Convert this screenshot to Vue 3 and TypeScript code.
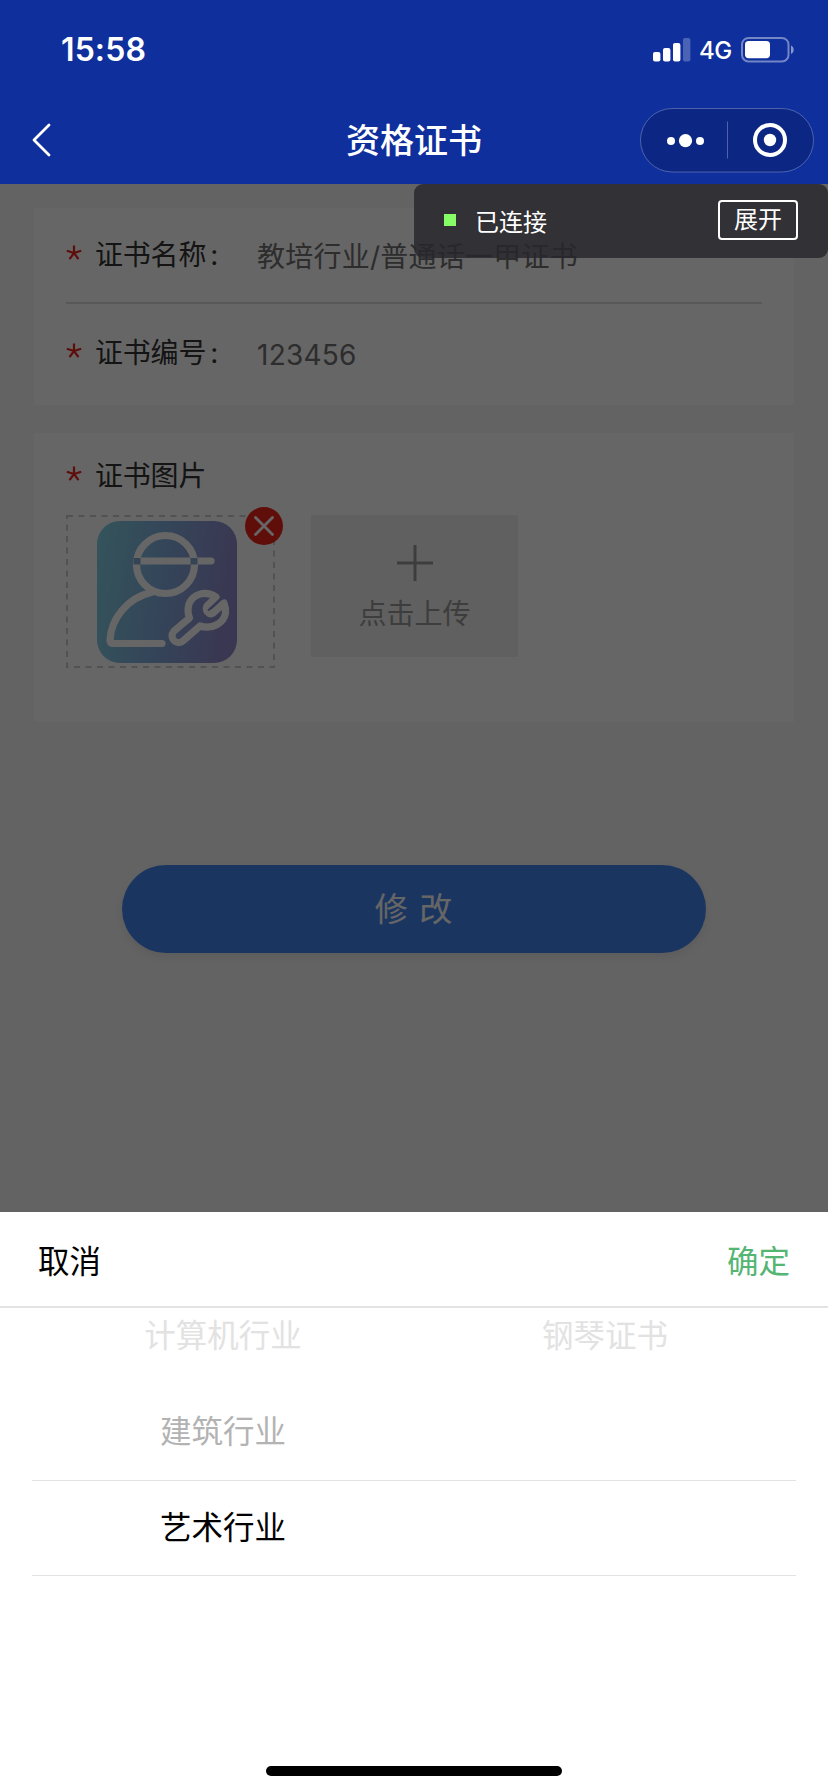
<script setup lang="ts">
import { ref } from 'vue'

interface Field {
  label: string
  value: string
}

const fields: Field[] = [
  { label: '证书名称', value: '教培行业/普通话一甲证书' },
  { label: '证书编号', value: '123456' },
]

const columns = ref<string[][]>([
  ['计算机行业', '建筑行业', '艺术行业'],
  ['钢琴证书'],
])
</script>

<template>
  <div class="screen">
    <header class="top">
      <div class="status">
        <span class="time">15:58</span>
        <div class="signals">
          <svg class="bars" width="38" height="24" viewBox="0 0 38 24">
            <rect x="0" y="14" width="7.4" height="9.4" rx="2" fill="#fff" />
            <rect x="10" y="10" width="7.4" height="13.4" rx="2" fill="#fff" />
            <rect x="20" y="5" width="7.4" height="18.4" rx="2" fill="#fff" />
            <rect x="30" y="0" width="7.4" height="23.4" rx="2" fill="#fff" opacity="0.25" />
          </svg>
          <span class="net">4G</span>
          <svg class="battery" width="54" height="26" viewBox="0 0 54 26">
            <rect x="1" y="1" width="46.5" height="23.4" rx="6.5" fill="none" stroke="#fff" stroke-opacity="0.42" stroke-width="2" />
            <rect x="4" y="4" width="25" height="17.2" rx="3.6" fill="#fff" />
            <path d="M50 8.500c3.600 1.600 3.600 6.900 0 8.500z" fill="#fff" fill-opacity="0.5" />
          </svg>
        </div>
      </div>
      <nav class="nav">
        <svg class="back" width="22" height="36" viewBox="0 0 22 36">
          <path d="M18 3 3 18l15 15" fill="none" stroke="#fff" stroke-width="2.8" stroke-linecap="round" stroke-linejoin="round" />
        </svg>
        <h1 class="title">资格证书</h1>
        <div class="capsule">
          <svg width="174" height="65" viewBox="0 0 174 65">
            <rect x="0.5" y="0.5" width="173" height="63.500" rx="31.700" fill="#000" fill-opacity="0.16" stroke="#fff" stroke-opacity="0.26" />
            <circle cx="31" cy="33" r="4" fill="#fff" />
            <circle cx="45.500" cy="32.700" r="6.600" fill="#fff" />
            <circle cx="60" cy="33" r="4" fill="#fff" />
            <path d="M87.500 13.500v37" stroke="#fff" stroke-opacity="0.28" />
            <circle cx="130" cy="32" r="15" fill="none" stroke="#fff" stroke-width="4" />
            <circle cx="130" cy="32" r="6.200" fill="#fff" />
          </svg>
        </div>
      </nav>
    </header>

    <main class="page">
      <section class="card fields">
        <div v-for="f in fields" :key="f.label" class="row">
          <svg class="star" width="16" height="16" viewBox="0 0 16 16">
            <path d="M8 8V0.500M8 8 .8 5.700M8 8l7.200-2.300M8 8l-4.500 6.200M8 8l4.500 6.200" />
          </svg>
          <span class="label">{{ f.label }}<span class="colon">:</span></span>
          <span class="value">{{ f.value }}</span>
        </div>
      </section>

      <section class="card photos">
        <div class="heading">
          <svg class="star" width="16" height="16" viewBox="0 0 16 16">
            <path d="M8 8V0.500M8 8 .8 5.700M8 8l7.200-2.300M8 8l-4.500 6.200M8 8l4.500 6.200" />
          </svg>
          <span class="label">证书图片</span>
        </div>
        <div class="tiles">
          <div class="thumb">
            <svg class="outline" width="209" height="153" viewBox="0 0 209 153">
              <rect x="1" y="1" width="207" height="151" fill="none" stroke="#ccc" stroke-width="2" stroke-dasharray="6 5.500" />
            </svg>
            <svg width="140" height="142" viewBox="0 0 140 142">
              <defs>
                <linearGradient id="tile" x1="0" y1="0" x2="1" y2="0.150">
                  <stop offset="0" stop-color="#82d2e4" />
                  <stop offset="0.500" stop-color="#82aede" />
                  <stop offset="1" stop-color="#918acc" />
                </linearGradient>
              </defs>
              <rect width="140" height="142" rx="23" fill="url(#tile)" />
              <g fill="none" stroke="#fff" stroke-width="7.200" stroke-linecap="round" stroke-linejoin="round">
                <circle cx="68.500" cy="43.500" r="29" />
                <path d="M40 40h74" />
                <path d="M54 71.500C30 77 14 98 13 119q0 3.500 3 3.500h49" />
                <path d="M119 76C108 69 96 73 92 83c-1.500 5-1.500 9 .5 14L77 110c-6 7 3 16 10 9l16-14c12 4 24-3 25.500-13q.5-5-1.500-10l-11 10q-3 2-5.500-1-2-3-.5-6z" />
              </g>
              <path d="M36.500 37h7v6.500h-7zM93.500 37h7v6.500h-7z" fill="#83a9d4" />
              <path d="M111 89.500 127 75" stroke="#8a92cf" stroke-width="2" />
            </svg>
            <svg class="remove" width="38" height="38" viewBox="0 0 38 38">
              <circle cx="19" cy="19" r="19" fill="#f0241a" />
              <path d="m10.500 10.500 17 17m0-17-17 17" stroke="#fff" stroke-width="2.800" stroke-linecap="round" />
            </svg>
          </div>
          <div class="upload">
            <svg width="36" height="36" viewBox="0 0 36 36">
              <path d="M18 0v36M0 18h36" stroke="#999" stroke-width="3" />
            </svg>
            <span>点击上传</span>
          </div>
        </div>
      </section>

      <button class="submit" type="button">修 改</button>
      <div class="mask"></div>

      <aside class="debug">
        <i class="dot"></i>
        <span class="state">已连接</span>
        <button class="expand" type="button">展开</button>
      </aside>
    </main>

    <section class="sheet">
      <div class="actions">
        <span>取消</span>
        <span class="confirm">确定</span>
      </div>
      <div class="wheel">
        <ul v-for="(items, c) in columns" :key="c" class="column">
          <li v-for="(item, i) in items" :key="item" :class="'level' + i">{{ item }}</li>
        </ul>
        <div class="indicator"></div>
      </div>
      <div class="home"></div>
    </section>
  </div>
</template>

<style>
body {
  margin: 0;
}
</style>

<style scoped>
.screen {
  display: flex;
  flex-direction: column;
  width: 828px;
  height: 1792px;
  overflow: hidden;
  background: #fff;
  font-family: Inter, "Noto Sans CJK SC", sans-serif;
  font-weight: 400;
}
.top {
  height: 184px;
  background: #0f2f9d;
  color: #fff;
}
.status {
  display: flex;
  align-items: center;
  justify-content: space-between;
  height: 100px;
  padding: 0 33px 0 61px;
}
.time {
  font-size: 32px;
  font-weight: 600;
  line-height: 40px;
  letter-spacing: 0.1px;
}
.signals {
  display: flex;
  align-items: center;
}
.net {
  width: 33px;
  margin: 2px 9px 0 8px;
  font-size: 24px;
  font-weight: 500;
  line-height: 28px;
  letter-spacing: -0.5px;
}
.nav {
  display: grid;
  grid-template-columns: 200px 1fr 200px;
  align-items: center;
  height: 80px;
}
.back {
  margin-left: 31px;
}
.title {
  margin: 0;
  padding-top: 1px;
  font-size: 34px;
  font-weight: 500;
  line-height: 48px;
  text-align: center;
}
.capsule {
  height: 65px;
  margin-left: 12px;
}
.page {
  position: relative;
  display: flex;
  flex-direction: column;
  height: 1028px;
  background: #f7f7f7;
}
.card {
  box-sizing: border-box;
  width: 760px;
  margin: 24px auto 0;
  padding: 0 32px;
  background: #fff;
}
.fields {
  height: 197px;
}
.row {
  display: flex;
  align-items: center;
  height: 94px;
}
.row + .row {
  height: 98px;
  border-top: 2px solid #ddd;
}
.star {
  width: 16px;
  margin: 0 13px 4px 0;
  fill: none;
  stroke: #e8231c;
  stroke-width: 2.2;
}
.label {
  width: 162px;
  color: #333;
  font-size: 28px;
  line-height: 40px;
  letter-spacing: -0.2px;
}
.colon {
  margin-left: 4px;
}
.value {
  padding-top: 4px;
  color: #707070;
  font-size: 28px;
  line-height: 40px;
  letter-spacing: 0.25px;
}
.photos {
  height: 289px;
  margin-top: 28px;
}
.heading {
  display: flex;
  align-items: center;
  height: 78px;
  padding-top: 4px;
}
.tiles {
  display: flex;
  gap: 36px;
}
.thumb {
  position: relative;
  box-sizing: border-box;
  width: 209px;
  height: 153px;
  padding: 6px 0 0 31px;
}
.outline {
  position: absolute;
  top: 0;
  left: 0;
}
.remove {
  position: absolute;
  top: -8px;
  right: -8px;
}
.upload {
  display: flex;
  flex-direction: column;
  align-items: center;
  width: 207px;
  height: 142px;
  padding-top: 30px;
  box-sizing: border-box;
  background: #f0f0f0;
  color: #999;
  font-size: 28px;
  line-height: 40px;
}
.upload span {
  margin-top: 13px;
}
.submit {
  width: 584px;
  height: 88px;
  margin: 143px auto 0;
  padding: 0;
  border: 0;
  border-radius: 44px;
  background: #4585f2;
  box-shadow: 0 4px 8px rgba(0, 0, 0, 0.08);
  color: #fff;
  font: inherit;
  font-size: 33px;
  line-height: 85px;
  letter-spacing: 1px;
}
.mask {
  position: absolute;
  inset: 0;
  background: rgba(0, 0, 0, 0.6);
}
.debug {
  position: absolute;
  top: 0;
  right: 0;
  box-sizing: border-box;
  display: flex;
  align-items: center;
  width: 414px;
  height: 74px;
  padding: 0 30px;
  border-radius: 9px;
  background: rgba(40, 38, 43, 0.83);
  color: #fff;
  font-size: 24px;
}
.dot {
  width: 12px;
  height: 12px;
  margin-bottom: 2px;
  background: #86ff67;
}
.state {
  flex: 1;
  margin: -1px 0 0 19px;
}
.expand {
  box-sizing: border-box;
  width: 80px;
  height: 40px;
  margin-bottom: 2px;
  padding: 0;
  border: 2px solid #fff;
  border-radius: 4px;
  background: none;
  color: inherit;
  font: inherit;
  line-height: 36px;
}
.sheet {
  display: flex;
  flex-direction: column;
  height: 580px;
  background: #fff;
  color: #000;
  font-size: 31.500px;
}
.actions {
  box-sizing: border-box;
  display: flex;
  align-items: center;
  justify-content: space-between;
  height: 96px;
  padding: 0 38px;
  border-bottom: 2px solid #e3e3e3;
}
.confirm {
  color: #55b573;
}
.wheel {
  position: relative;
  display: flex;
  height: 452px;
  margin: 0 32px;
}
.column {
  flex: 1;
  margin: 0;
  padding: 4px 0 0;
  list-style: none;
  text-align: center;
}
.column li {
  height: 96px;
  line-height: 48px;
}
.level0 {
  color: #e2e2e2;
}
.level1 {
  color: #b3b3b3;
}
.indicator {
  position: absolute;
  top: 172px;
  left: 0;
  right: 0;
  height: 94px;
  border-top: 1px solid #e3e3e3;
  border-bottom: 1px solid #e3e3e3;
}
.home {
  width: 296px;
  height: 10px;
  margin: 6px auto 0;
  border-radius: 5px;
  background: #000;
}
</style>
